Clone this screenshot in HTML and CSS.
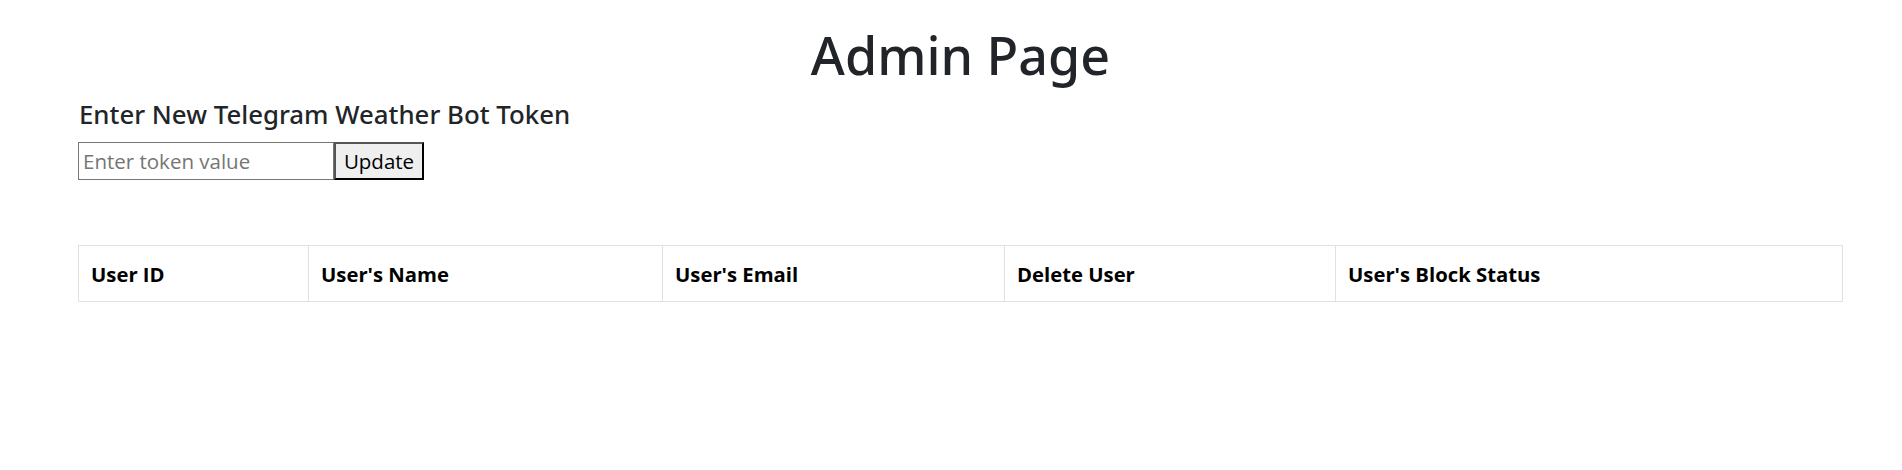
FILE: index.html
```html
<!DOCTYPE html>
<html lang="en">
<head>
<meta charset="utf-8">
<title>Admin Page</title>
<link rel="stylesheet" href="styles.css">
</head>
<body>
<div class="container">
  <h1 class="title">Admin Page</h1>
  <h4 class="subtitle">Enter New Telegram Weather Bot Token</h4>
  <form class="token-form">
    <input class="token-input" type="text" placeholder="Enter token value">
    <button class="token-btn" type="button">Update</button>
  </form>
  <table class="users">
    <thead>
      <tr>
        <th class="c1">User ID</th>
        <th class="c2">User's Name</th>
        <th class="c3">User's Email</th>
        <th class="c4">Delete User</th>
        <th class="c5">User's Block Status</th>
      </tr>
    </thead>
    <tbody></tbody>
  </table>
</div>
</body>
</html>
```
FILE: styles.css
```css
* { box-sizing: border-box; }
html, body { margin: 0; padding: 0; background: #fff; }
body {
  font-family: "Open Sans", "Noto Sans", sans-serif;
  color: #212529;
}
.container {
  padding: 24px 59px 0 78px;
  display: flex;
  flex-direction: column;
}
.title {
  margin: 0;
  font-family: "Noto Sans", "Open Sans", sans-serif;
  font-size: 52px;
  font-weight: 500;
  line-height: 1.2;
  text-align: center;
  color: #212529;
}
.subtitle {
  margin: 13px 0 0 1px;
  font-family: "Noto Sans", "Open Sans", sans-serif;
  font-size: 25.8px;
  font-weight: 500;
  line-height: 1.2;
  color: #212529;
}
.token-form {
  margin-top: 12px;
  display: flex;
  align-items: stretch;
  height: 38px;
}
.token-input {
  width: 256px;
  height: 38px;
  margin: 0;
  padding: 1px 4px;
  border: 1px solid #767676;
  font-family: inherit;
  font-size: 20.5px;
  color: #000;
  outline: none;
}
.token-input::placeholder { color: #757575; }
.token-btn {
  width: 90px;
  height: 38px;
  margin: 0;
  padding: 0 6px;
  background: #efefef;
  border: 2px solid;
  border-color: #555 #000 #000 #555;
  font-family: inherit;
  font-size: 20.5px;
  color: #000;
}
.users {
  margin-top: 65px;
  width: 100%;
  border-collapse: collapse;
  table-layout: fixed;
}
.users th {
  border: 1px solid #dee2e6;
  padding: 12px 12px;
  height: 56px;
  text-align: left;
  font-size: 20.3px;
  font-weight: 700;
  color: #000;
  line-height: 30px;
}
.c1 { width: 230px; }
.c2 { width: 354px; }
.c3 { width: 342px; }
.c4 { width: 331px; }
.c5 { width: auto; }
```
